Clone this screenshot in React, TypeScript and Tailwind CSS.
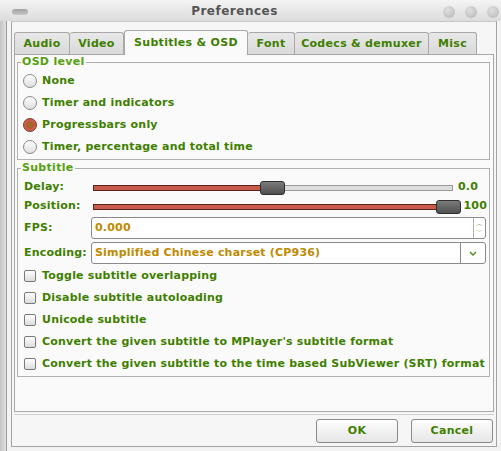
import React from "react";

const labelCls = "text-[#3f7f00] font-bold text-[11px] tracking-[0.2px] whitespace-nowrap";

function Radio({ label, checked }: { label: string; checked?: boolean }) {
  return (
    <div className="flex items-center h-[22px] pl-[5px]">
      {checked ? (
        <div className="w-[14px] h-[14px] rounded-full border border-[#7a3a2c] bg-[radial-gradient(circle,#8a7a2a_0%,#b05a30_35%,#d0604a_60%,#c0503c_100%)]" />
      ) : (
        <div className="w-[14px] h-[14px] rounded-full border border-[#8a8a8a] bg-[linear-gradient(#ffffff,#dedede)]" />
      )}
      <span className={labelCls + " ml-[5px]"}>{label}</span>
    </div>
  );
}

function Check({ label }: { label: string }) {
  return (
    <div className="flex items-center h-[22px] pl-[6px]">
      <div className="w-[12px] h-[12px] rounded-[2px] border border-[#7a7a7a] bg-[linear-gradient(#ffffff,#dcdcdc)]" />
      <span className={labelCls + " ml-[6px]"}>{label}</span>
    </div>
  );
}

function Slider({ fillW, totalW, handleX }: { fillW: number; totalW: number; handleX: number }) {
  return (
    <div className="relative h-[14px]" style={{ width: totalW }}>
      <div className="absolute left-0 right-0 top-[4px] h-[6px] flex">
        <div className="h-full bg-[#c85a4c] border border-[#5a241c]" style={{ width: fillW }} />
        <div className="h-full flex-1 bg-[#dedede] border border-[#9a9a9a] border-l-0" />
      </div>
      <div
        className="absolute top-0 w-[25px] h-[14px] rounded-[3px] border border-[#2e2e2e] bg-[linear-gradient(#7a7a7a,#505050)]"
        style={{ left: handleX }}
      />
    </div>
  );
}

function Tab({ label, w, selected }: { label: string; w: number; selected?: boolean }) {
  if (selected) {
    return (
      <div
        className="h-[25px] -mb-px relative z-10 bg-[#fafafa] border border-[#a8a8a8] border-b-0 rounded-t-[3px] flex items-center justify-center text-[#3f7f00] font-bold text-[11px] tracking-[0.3px]"
        style={{ width: w }}
      >
        {label}
      </div>
    );
  }
  return (
    <div
      className="h-[22px] bg-[linear-gradient(#e8e8e8,#dadada)] border border-[#a8a8a8] border-b-0 border-l-0 first:border-l rounded-t-[3px] flex items-center justify-center text-[#3f7f00] font-bold text-[11px] tracking-[0.3px] pt-[2px]"
      style={{ width: w }}
    >
      {label}
    </div>
  );
}

export default function App() {
  return (
    <div className="w-[501px] h-[451px] bg-[#e4e4e4] flex flex-col overflow-hidden font-['DejaVu_Sans',sans-serif]">
      {/* Title bar */}
      <div className="h-[21px] shrink-0 bg-[linear-gradient(#f4f4f4,#dcdcdc)] flex items-center relative">
        <div className="absolute left-[12px] top-[9px] w-[16px] h-[6px] rounded-full bg-[linear-gradient(#a0a0a0,#c8c8c8)]" />
        <div className="flex-1 text-center text-[12px] font-bold text-[#555555] tracking-[0.5px] pr-[32px] pt-[1px]">Preferences</div>
        <div className="absolute right-[2px] top-[6px] flex gap-[10px]">
          <div className="w-[12px] h-[12px] rounded-full bg-[radial-gradient(circle_at_40%_35%,#e0e0e0,#b4b4b4)]" />
          <div className="w-[12px] h-[12px] rounded-full bg-[radial-gradient(circle_at_40%_35%,#e0e0e0,#b4b4b4)]" />
          <div className="w-[12px] h-[12px] rounded-full bg-[radial-gradient(circle_at_40%_35%,#e0e0e0,#b4b4b4)]" />
        </div>
      </div>

      {/* Body */}
      <div className="flex-1 flex">
        <div className="w-[7px] bg-[linear-gradient(90deg,#c4c4c4,#e2e2e2)] border-r border-[#9c9c9c]" />
        <div className="flex-1 bg-[#f3f3f3] pl-[4px] pr-[4px] pb-[4px] flex flex-col">
          <div className="flex-1 border border-[#a4a4a4] border-t-[#c8c8c8] bg-[#f6f6f6] pl-[2px] pr-[2px] pt-[7px] flex flex-col">
            {/* Tabs */}
            <div className="flex items-end h-[25px]">
              <Tab label="Audio" w={56} />
              <Tab label="Video" w={54} />
              <Tab label="Subtitles & OSD" w={124} selected />
              <Tab label="Font" w={47} />
              <Tab label="Codecs & demuxer" w={134} />
              <Tab label="Misc" w={48} />
            </div>
            {/* Tab pane */}
            <div className="w-[480px] h-[358px] border border-[#a8a8a8] bg-[#fafafa] pl-[2px] pr-[3px] pt-[7px] flex flex-col">
              {/* OSD level group */}
              <div className="relative border border-[#b0b0b0] h-[98px] pt-[7px] flex flex-col">
                <div className="absolute -top-[8px] left-[3px] bg-[#fafafa] px-[1px] text-[#56a010] font-bold text-[11px] tracking-[0.3px] leading-[14px]">
                  OSD level
                </div>
                <Radio label="None" />
                <Radio label="Timer and indicators" />
                <Radio label="Progressbars only" checked />
                <Radio label="Timer, percentage and total time" />
              </div>
              {/* Subtitle group */}
              <div className="relative mt-[8px] border border-[#b0b0b0] h-[209px] pt-[9px] pl-[6px] pr-[2px] flex flex-col">
                <div className="absolute -top-[8px] left-[3px] bg-[#fafafa] px-[1px] text-[#56a010] font-bold text-[11px] tracking-[0.3px] leading-[14px]">
                  Subtitle
                </div>
                <div className="flex items-center h-[19px]">
                  <span className={labelCls + " w-[69px]"}>Delay:</span>
                  <Slider totalW={360} fillW={170} handleX={167} />
                  <span className={labelCls + " ml-[5px]"}>0.0</span>
                </div>
                <div className="flex items-center h-[19px]">
                  <span className={labelCls + " w-[69px]"}>Position:</span>
                  <Slider totalW={368} fillW={345} handleX={343} />
                  <span className={labelCls + " ml-[4px]"}>100</span>
                </div>
                <div className="flex items-center h-[24px]">
                  <span className={labelCls + " w-[67px]"}>FPS:</span>
                  <div className="w-[395px] h-[22px] border border-[#8a8a8a] rounded-[3px] bg-white flex">
                    <span className="flex-1 pl-[3px] text-[#c08a00] font-bold text-[11px] tracking-[0.2px] leading-[20px]">0.000</span>
                    <div className="w-[12px] border-l border-[#b0b0b0] flex flex-col items-center justify-center text-[#6aa030] text-[7px] leading-[8px]">
                      <span>︿</span>
                      <span>﹀</span>
                    </div>
                  </div>
                </div>
                <div className="flex items-center h-[24px] mt-[1px]">
                  <span className={labelCls + " w-[67px]"}>Encoding:</span>
                  <div className="w-[395px] h-[22px] border border-[#8a8a8a] rounded-[3px] bg-white flex">
                    <span className="flex-1 pl-[3px] text-[#c08a00] font-bold text-[11px] tracking-[0.2px] leading-[20px]">
                      Simplified Chinese charset (CP936)
                    </span>
                    <div className="w-[25px] border-l border-[#8a8a8a] flex items-center justify-center">
                      <svg width="8" height="5" viewBox="0 0 8 5">
                        <path d="M1 1 L4 4 L7 1" stroke="#4a8a10" strokeWidth="1.4" fill="none" />
                      </svg>
                    </div>
                  </div>
                </div>
                <div className="-ml-[6px] flex flex-col">
                  <Check label="Toggle subtitle overlapping" />
                  <Check label="Disable subtitle autoloading" />
                  <Check label="Unicode subtitle" />
                  <Check label="Convert the given subtitle to MPlayer's subtitle format" />
                  <Check label="Convert the given subtitle to the time based SubViewer (SRT) format" />
                </div>
              </div>
            </div>
            {/* Separator + buttons */}
            <div className="w-[480px] h-px bg-[#cfcfcf] mt-[2px]" />
            <div className="flex justify-end gap-[13px] pr-[1px] mt-[4px]">
              <button className="w-[82px] h-[24px] border border-[#8a8a8a] rounded-[3px] bg-[linear-gradient(#fdfdfd,#e6e6e6)] text-[#3f7f00] font-bold text-[11px] tracking-[0.3px]">
                OK
              </button>
              <button className="w-[82px] h-[24px] border border-[#8a8a8a] rounded-[3px] bg-[linear-gradient(#fdfdfd,#e6e6e6)] text-[#3f7f00] font-bold text-[11px] tracking-[0.3px]">
                Cancel
              </button>
            </div>
          </div>
        </div>
      </div>
    </div>
  );
}
